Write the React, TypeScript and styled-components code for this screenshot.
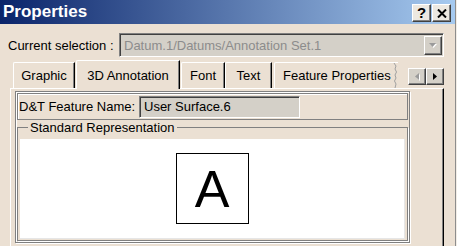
import React from 'react';
import styled, { createGlobalStyle, css } from 'styled-components';

const Global = createGlobalStyle`
  html, body {
    margin: 0;
    padding: 0;
    background: #f2ede6;
  }
  body {
    font-family: "Liberation Sans", Arial, sans-serif;
    font-size: 13px;
    color: #000;
  }
`;

const face = '#ebe0d3';
const grey = '#d4d0c8';

const raised = css`
  border-top: 1px solid #fff;
  border-left: 1px solid #fff;
  border-right: 1px solid #404040;
  border-bottom: 1px solid #404040;
  box-shadow: inset -1px -1px 0 #808080;
`;

const sunken = css`
  border-top: 1px solid #808080;
  border-left: 1px solid #808080;
  border-right: 1px solid #fff;
  border-bottom: 1px solid #fff;
  box-shadow: inset 1px 1px 0 #404040, inset -1px -1px 0 ${grey};
`;

const Window = styled.div`
  width: 455px;
  height: 246px;
  overflow: hidden;
  background: ${face};
  border-right: 1px solid #8d8d8d;
  display: flex;
  flex-direction: column;
`;

const TitleBar = styled.div`
  height: 24px;
  flex: none;
  display: flex;
  align-items: center;
  justify-content: space-between;
  padding: 0 4px 0 3px;
  background: linear-gradient(to right, #0a246a, #a6caf0);
`;

const Title = styled.span`
  color: #fff;
  font-weight: bold;
  font-size: 17px;
  line-height: 24px;
  margin-top: -1px;
`;

const CaptionButtons = styled.div`
  display: flex;
  gap: 1px;
  margin-top: 2px;
`;

const CaptionButton = styled.div`
  ${raised};
  width: 17px;
  height: 16px;
  background: #ece8e1;
  display: flex;
  align-items: center;
  justify-content: center;
  font-weight: bold;
  font-size: 15px;
  line-height: 16px;
`;

const Body = styled.div`
  padding-top: 9px;
  display: flex;
  flex-direction: column;
`;

const SelectionRow = styled.div`
  display: flex;
  align-items: center;
  padding-left: 8px;
`;

const RowLabel = styled.span<{ $width: number }>`
  width: ${(p) => p.$width}px;
  flex: none;
  white-space: nowrap;
`;

const Combo = styled.div`
  ${sunken};
  width: 325px;
  height: 24px;
  box-sizing: border-box;
  background: ${grey};
  display: flex;
  align-items: center;
  padding: 2px 1px 2px 4px;
`;

const ComboText = styled.span`
  flex: 1;
  color: #8c8c8c;
  white-space: nowrap;
  overflow: hidden;
`;

const ArrowButton = styled.div<{ $w: number; $h: number }>`
  ${raised};
  width: ${(p) => p.$w}px;
  height: ${(p) => p.$h}px;
  box-sizing: border-box;
  background: ${grey};
  display: flex;
  align-items: center;
  justify-content: center;
  flex: none;
`;

const TabStrip = styled.div`
  display: flex;
  align-items: flex-end;
  height: 28px;
  margin-top: 3px;
  padding-left: 13px;
  width: 444px;
  box-sizing: border-box;
`;

const Tab = styled.div<{ $width: number; $gap: number; $active?: boolean }>`
  width: ${(p) => p.$width}px;
  margin-left: ${(p) => p.$gap}px;
  height: ${(p) => (p.$active ? 29 : 26)}px;
  margin-bottom: ${(p) => (p.$active ? -1 : 0)}px;
  box-sizing: border-box;
  background: ${face};
  border-top: 1px solid #fff;
  border-left: 1px solid #fff;
  border-right: 1px solid #000;
  box-shadow: inset -1px 0 0 #808080;
  border-top-left-radius: 2px;
  display: flex;
  align-items: center;
  justify-content: center;
  white-space: nowrap;
  position: relative;
  z-index: ${(p) => (p.$active ? 1 : 0)};
`;

const TornTab = styled(Tab)`
  border-right: none;
  box-shadow: none;
  justify-content: flex-start;
  padding-left: 8px;
`;

const TornEdge = styled.svg`
  margin-left: auto;
  flex: none;
`;

const ScrollArrows = styled.div`
  display: flex;
  margin-left: auto;
  align-self: flex-end;
  margin-bottom: 3px;
`;

const TabPanel = styled.div`
  margin-left: 10px;
  width: 434px;
  height: 200px;
  box-sizing: border-box;
  border-top: 1px solid #fff;
  border-left: 1px solid #fff;
  border-right: 1px solid #000;
  box-shadow: inset -1px 0 0 #808080;
  padding: 2px 0 0 4px;
`;

const Frame = styled.div`
  width: 395px;
  box-sizing: border-box;
  border: 1px solid #808080;
  box-shadow: inset 1px 1px 0 #fff, 1px 1px 0 #fff;
  padding: 1px 1px 1px 1px;
  display: flex;
  flex-direction: column;
`;

const NameRow = styled.div`
  height: 27px;
  box-sizing: border-box;
  border: 1px solid #808080;
  box-shadow: inset 1px 1px 0 #fff;
  display: flex;
  align-items: center;
  padding-left: 1px;
`;

const NameField = styled.div`
  ${sunken};
  width: 161px;
  height: 22px;
  box-sizing: border-box;
  background: ${grey};
  display: flex;
  align-items: center;
  padding-left: 4px;
`;

const GroupBox = styled.fieldset`
  margin: 0;
  padding: 4px 2px 1px 2px;
  min-inline-size: 0;
  border: 1px solid #808080;
  box-shadow: 1px 1px 0 #fff;
  display: flex;
  flex-direction: column;
`;

const Legend = styled.legend`
  margin-left: 8px;
  padding: 0 2px;
  line-height: 15px;
`;

const Preview = styled.div`
  height: 99px;
  background: #fff;
  border-right: 1px solid #e6e6e6;
  border-bottom: 1px solid #e6e6e6;
  display: flex;
  align-items: center;
  justify-content: center;
`;

const SymbolBox = styled.div`
  width: 73px;
  height: 71px;
  box-sizing: border-box;
  border: 1px solid #000;
  display: flex;
  align-items: center;
  justify-content: center;
  font-size: 52px;
  line-height: 1;
`;

const Triangle = ({ dir, disabled }: { dir: 'left' | 'right' | 'down'; disabled?: boolean }) => {
  const fill = disabled ? '#9a9a9a' : '#000';
  const pts =
    dir === 'down' ? '0,0 7,0 3.5,4' : dir === 'left' ? '4,0 4,7 0,3.5' : '0,0 0,7 4,3.5';
  const w = dir === 'down' ? 7 : 4;
  const h = dir === 'down' ? 4 : 7;
  return (
    <svg width={w + 1} height={h + 1} viewBox={`0 0 ${w + 1} ${h + 1}`}>
      {disabled && <polygon points={pts} fill="#fff" transform="translate(1,1)" />}
      <polygon points={pts} fill={fill} />
    </svg>
  );
};

export default function App() {
  return (
    <>
      <Global />
      <Window>
        <TitleBar>
          <Title>Properties</Title>
          <CaptionButtons>
            <CaptionButton>?</CaptionButton>
            <CaptionButton>
              <svg width="10" height="9" viewBox="0 0 10 9">
                <path d="M1 0.5 L9 8.5 M9 0.5 L1 8.5" stroke="#000" strokeWidth="2" />
              </svg>
            </CaptionButton>
          </CaptionButtons>
        </TitleBar>
        <Body>
          <SelectionRow>
            <RowLabel $width={111}>Current selection :</RowLabel>
            <Combo>
              <ComboText>Datum.1/Datums/Annotation Set.1</ComboText>
              <ArrowButton $w={18} $h={19}>
                <Triangle dir="down" disabled />
              </ArrowButton>
            </Combo>
          </SelectionRow>
          <TabStrip>
            <Tab $width={62} $gap={0}>Graphic</Tab>
            <Tab $width={104} $gap={1} $active>3D Annotation</Tab>
            <Tab $width={44} $gap={1}>Font</Tab>
            <Tab $width={47} $gap={0}>Text</Tab>
            <TornTab $width={124} $gap={2}>
              Feature Properties
              <TornEdge width="5" height="25" viewBox="0 0 5 25">
                <path d="M1 0 L3 3 L2 6 L3.5 9 L2 12 L3 15 L1.5 18 L3 21 L2 25" fill="none" stroke="#a0a0a0" />
              </TornEdge>
            </TornTab>
            <ScrollArrows>
              <ArrowButton $w={18} $h={17}>
                <Triangle dir="left" disabled />
              </ArrowButton>
              <ArrowButton $w={18} $h={17}>
                <Triangle dir="right" />
              </ArrowButton>
            </ScrollArrows>
          </TabStrip>
          <TabPanel>
            <Frame>
              <NameRow>
                <RowLabel $width={120}>D&amp;T Feature Name:</RowLabel>
                <NameField>User Surface.6</NameField>
              </NameRow>
              <GroupBox>
                <Legend>Standard Representation</Legend>
                <Preview>
                  <SymbolBox>A</SymbolBox>
                </Preview>
              </GroupBox>
            </Frame>
          </TabPanel>
        </Body>
      </Window>
    </>
  );
}
